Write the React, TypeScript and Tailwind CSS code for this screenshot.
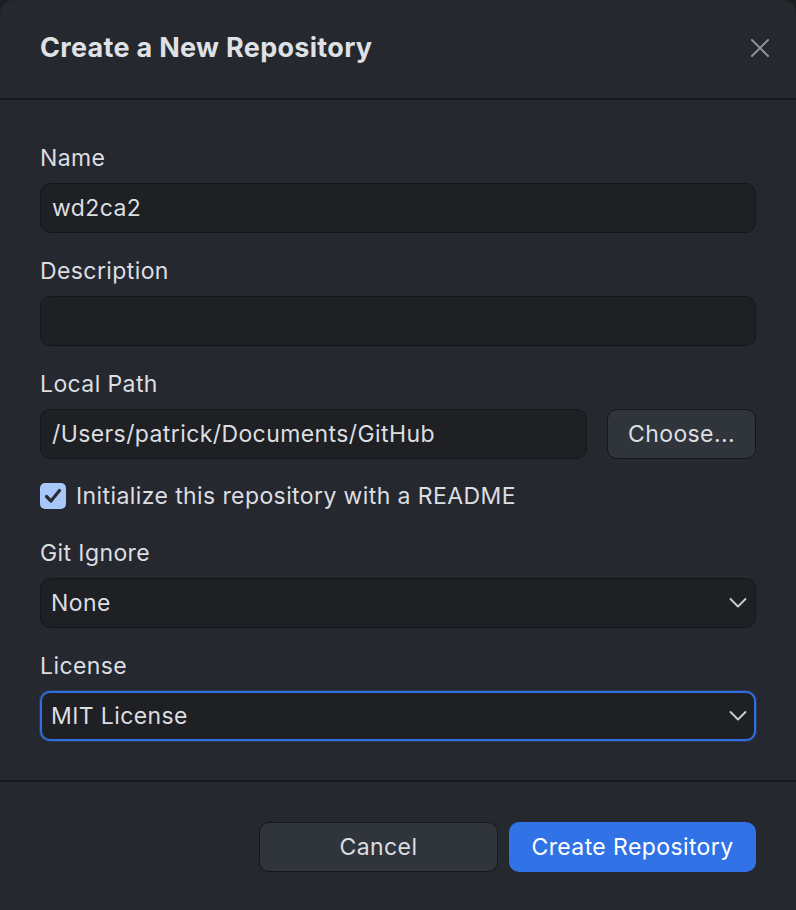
function Label({ children }: { children: React.ReactNode }) {
  return <label className="block h-[28px] leading-[28px] text-[23px] tracking-[0.4px] text-[#dcdee2] mb-[11px]">{children}</label>;
}

function TextBox({ value, className = "" }: { value?: string; className?: string }) {
  return (
    <div
      className={
        "h-[50px] rounded-[10px] bg-[#1e2024] border border-[#15171a] flex items-center px-[11px] text-[23px] tracking-[0.4px] text-[#dcdee2] " +
        className
      }
    >
      {value}
    </div>
  );
}

function Chevron() {
  return (
    <svg width="20" height="12" viewBox="0 0 20 12" className="text-[#c9ccd1]">
      <polyline points="2.5,2 10,9.5 17.5,2" fill="none" stroke="currentColor" strokeWidth="1.9" strokeLinecap="round" strokeLinejoin="round" />
    </svg>
  );
}

function SelectBox({ value, focused }: { value: string; focused?: boolean }) {
  return (
    <div
      className={
        "h-[50px] rounded-[10px] bg-[#1e2024] flex items-center justify-between text-[23px] tracking-[0.4px] text-[#dcdee2] " +
        (focused
          ? "border-2 border-[#2f6fdf] shadow-[0_0_0_1px_rgba(47,111,223,0.25)] pl-[9px] pr-[6px]"
          : "border border-[#15171a] pl-[10px] pr-[7px]")
      }
    >
      <span>{value}</span>
      <Chevron />
    </div>
  );
}

export default function App() {
  return (
    <div className="w-[796px] h-[910px] bg-[#1b1d21] font-['Inter',sans-serif]">
      <div className="w-full h-full bg-[#25282e] rounded-t-[14px] flex flex-col">
        <div className="h-[100px] flex items-center justify-between pl-[40px] pr-[26px] border-b-2 border-[#16181b]">
          <h2 className="text-[27px] font-bold text-[#dfe1e5] tracking-[0.3px] -mt-[2px]">Create a New Repository</h2>
          <svg width="20" height="20" viewBox="0 0 20 20" className="text-[#8d9096] -mt-[2px]">
            <path d="M2 2 L18 18 M18 2 L2 18" stroke="currentColor" strokeWidth="2" strokeLinecap="round" />
          </svg>
        </div>

        <div className="flex flex-col px-[40px] pt-[44px] pb-[39px] border-b-2 border-[#16181b]">
          <Label>Name</Label>
          <TextBox value="wd2ca2" />
          <div className="h-[24px]" />
          <Label>Description</Label>
          <TextBox />
          <div className="h-[24px]" />
          <Label>Local Path</Label>
          <div className="flex gap-[20px]">
            <TextBox value="/Users/patrick/Documents/GitHub" className="flex-1" />
            <button className="w-[149px] h-[50px] rounded-[10px] bg-[#30343b] border border-[#15171a] text-[23px] tracking-[0.4px] text-[#dcdee2]">
              Choose...
            </button>
          </div>
          <div className="flex items-center gap-[10px] h-[28px] mt-[23px] mb-[29px]">
            <div className="w-[26px] h-[26px] rounded-[5px] bg-[#a8c8fb] flex items-center justify-center">
              <svg width="18" height="16" viewBox="0 0 18 16">
                <polyline points="2.5,8.5 7,13 15.5,2.5" fill="none" stroke="#2a2d32" strokeWidth="3.2" strokeLinecap="round" strokeLinejoin="round" />
              </svg>
            </div>
            <span className="text-[23px] tracking-[0.4px] text-[#dcdee2]">Initialize this repository with a README</span>
          </div>
          <Label>Git Ignore</Label>
          <SelectBox value="None" />
          <div className="h-[24px]" />
          <Label>License</Label>
          <SelectBox value="MIT License" focused />
        </div>

        <div className="flex justify-end gap-[11px] px-[40px] pt-[40px]">
          <button className="w-[239px] h-[50px] rounded-[10px] bg-[#30343b] border border-[#15171a] text-[23px] tracking-[0.4px] text-[#dcdee2]">
            Cancel
          </button>
          <button className="w-[247px] h-[50px] rounded-[10px] bg-[#3172e6] text-[23px] tracking-[0.4px] text-white">
            Create Repository
          </button>
        </div>
      </div>
    </div>
  );
}
